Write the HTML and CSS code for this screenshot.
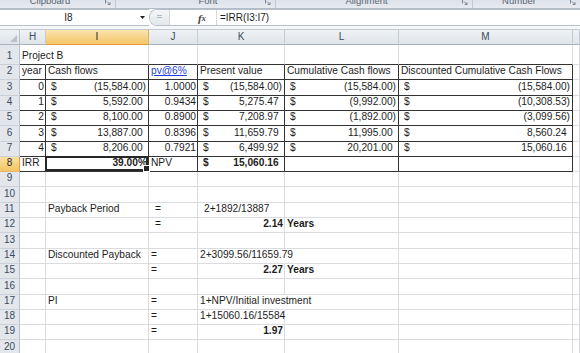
FILE: index.html
```html
<!DOCTYPE html>
<html>
<head>
<meta charset="utf-8">
<link rel="stylesheet" href="styles.css">
</head>
<body>
<div class="ribbon">
  <div class="grp g1"><span class="lbl">Clipboard</span><svg class="launch" width="6" height="8" viewBox="0 0 6 8"><path d="M0.5 0v3.5M2 1.5L5 4.5M5 2.2v2.3H2.7" fill="none" stroke="#7d8794" stroke-width="1"/></svg></div>
  <div class="grp g2"><span class="lbl">Font</span><svg class="launch" width="6" height="8" viewBox="0 0 6 8"><path d="M0.5 0v3.5M2 1.5L5 4.5M5 2.2v2.3H2.7" fill="none" stroke="#7d8794" stroke-width="1"/></svg></div>
  <div class="grp g3"><span class="lbl">Alignment</span><svg class="launch" width="6" height="8" viewBox="0 0 6 8"><path d="M0.5 0v3.5M2 1.5L5 4.5M5 2.2v2.3H2.7" fill="none" stroke="#7d8794" stroke-width="1"/></svg></div>
  <div class="grp g4"><span class="lbl">Number</span><svg class="launch" width="6" height="8" viewBox="0 0 6 8"><path d="M0.5 0v3.5M2 1.5L5 4.5M5 2.2v2.3H2.7" fill="none" stroke="#7d8794" stroke-width="1"/></svg></div>
</div>
<div class="fbar">
  <div class="namebox"><span class="nbtext">I8</span><svg class="dd" width="5" height="3" viewBox="0 0 5 3"><path d="M0 0h5L2.5 3z" fill="#222"/></svg></div>
  <div class="fbox">
    <div class="grip"><svg width="20" height="15" viewBox="0 0 20 15"><path d="M7 5.5h5M7 7.5h5" stroke="#b3bac3" stroke-width="1"/></svg></div>
    <div class="fx"><span class="f">f</span><span class="x">x</span></div>
    <div class="ftext">=IRR(I3:I7)</div>
  </div>
</div>
<div class="gap"></div>
<div class="sheet">
  <div class="hdr">
    <div class="corner"><svg width="19" height="14" viewBox="0 0 19 14"><path d="M17 5v7h-7z" fill="#b9c1cb"/></svg></div>
    <div class="hc ch">H</div>
    <div class="hc ci on">I</div>
    <div class="hc cj">J</div>
    <div class="hc ck">K</div>
    <div class="hc cl">L</div>
    <div class="hc cm">M</div>
    <div class="hc cn"></div>
  </div>

  <div class="r h20">
    <div class="rh">1</div>
    <div class="c ch tb ov">Project B</div>
    <div class="c ci tb"></div>
    <div class="c cj tb"></div>
    <div class="c ck tb"></div>
    <div class="c cl tb"></div>
    <div class="c cm tb"></div>
    <div class="c cn"></div>
  </div>

  <div class="r">
    <div class="rh">2</div>
    <div class="c ch t">year</div>
    <div class="c ci t">Cash flows</div>
    <div class="c cj t"><span class="lnk">pv@6%</span></div>
    <div class="c ck t">Present value</div>
    <div class="c cl t">Cumulative Cash flows</div>
    <div class="c cm t">Discounted Cumulative Cash Flows</div>
    <div class="c cn"></div>
  </div>

  <div class="r h16">
    <div class="rh">3</div>
    <div class="c ch t rt">0</div>
    <div class="c ci t mn"><span>$</span><span>(15,584.00)</span></div>
    <div class="c cj t rt">1.0000</div>
    <div class="c ck t mn"><span>$</span><span>(15,584.00)</span></div>
    <div class="c cl t mn"><span>$</span><span>(15,584.00)</span></div>
    <div class="c cm t mn"><span>$</span><span>(15,584.00)</span></div>
    <div class="c cn"></div>
  </div>

  <div class="r">
    <div class="rh">4</div>
    <div class="c ch t rt">1</div>
    <div class="c ci t mn"><span>$</span><span class="pos">5,592.00</span></div>
    <div class="c cj t rt">0.9434</div>
    <div class="c ck t mn"><span>$</span><span class="pos">5,275.47</span></div>
    <div class="c cl t mn"><span>$</span><span>(9,992.00)</span></div>
    <div class="c cm t mn"><span>$</span><span>(10,308.53)</span></div>
    <div class="c cn"></div>
  </div>

  <div class="r">
    <div class="rh">5</div>
    <div class="c ch t rt">2</div>
    <div class="c ci t mn"><span>$</span><span class="pos">8,100.00</span></div>
    <div class="c cj t rt">0.8900</div>
    <div class="c ck t mn"><span>$</span><span class="pos">7,208.97</span></div>
    <div class="c cl t mn"><span>$</span><span>(1,892.00)</span></div>
    <div class="c cm t mn"><span>$</span><span>(3,099.56)</span></div>
    <div class="c cn"></div>
  </div>

  <div class="r h16">
    <div class="rh">6</div>
    <div class="c ch t rt">3</div>
    <div class="c ci t mn"><span>$</span><span class="pos">13,887.00</span></div>
    <div class="c cj t rt">0.8396</div>
    <div class="c ck t mn"><span>$</span><span class="pos">11,659.79</span></div>
    <div class="c cl t mn"><span>$</span><span class="pos">11,995.00</span></div>
    <div class="c cm t mn"><span>$</span><span class="pos">8,560.24</span></div>
    <div class="c cn"></div>
  </div>

  <div class="r">
    <div class="rh">7</div>
    <div class="c ch t rt">4</div>
    <div class="c ci t mn"><span>$</span><span class="pos">8,206.00</span></div>
    <div class="c cj t rt">0.7921</div>
    <div class="c ck t mn"><span>$</span><span class="pos">6,499.92</span></div>
    <div class="c cl t mn"><span>$</span><span class="pos">20,201.00</span></div>
    <div class="c cm t mn"><span>$</span><span class="pos">15,060.16</span></div>
    <div class="c cn"></div>
  </div>

  <div class="r">
    <div class="rh on">8</div>
    <div class="c ch t">IRR</div>
    <div class="c ci t rt b sel">39.00%</div>
    <div class="c cj t">NPV</div>
    <div class="c ck t mn b"><span>$</span><span class="pos">15,060.16</span></div>
    <div class="c cl t"></div>
    <div class="c cm t"></div>
    <div class="c cn"></div>
  </div>

  <div class="r">
    <div class="rh">9</div>
    <div class="c ch"></div><div class="c ci"></div><div class="c cj"></div><div class="c ck"></div><div class="c cl"></div><div class="c cm"></div><div class="c cn"></div>
  </div>

  <div class="r h16">
    <div class="rh">10</div>
    <div class="c ch"></div><div class="c ci"></div><div class="c cj"></div><div class="c ck"></div><div class="c cl"></div><div class="c cm"></div><div class="c cn"></div>
  </div>

  <div class="r">
    <div class="rh">11</div>
    <div class="c ch"></div>
    <div class="c ci">Payback Period</div>
    <div class="c cj ind">=</div>
    <div class="c ck ind">2+1892/13887</div>
    <div class="c cl"></div><div class="c cm"></div><div class="c cn"></div>
  </div>

  <div class="r">
    <div class="rh">12</div>
    <div class="c ch"></div>
    <div class="c ci"></div>
    <div class="c cj ind">=</div>
    <div class="c ck rt b">2.14</div>
    <div class="c cl b">Years</div>
    <div class="c cm"></div><div class="c cn"></div>
  </div>

  <div class="r h16">
    <div class="rh">13</div>
    <div class="c ch"></div><div class="c ci"></div><div class="c cj"></div><div class="c ck"></div><div class="c cl"></div><div class="c cm"></div><div class="c cn"></div>
  </div>

  <div class="r">
    <div class="rh">14</div>
    <div class="c ch"></div>
    <div class="c ci">Discounted Payback</div>
    <div class="c cj">=</div>
    <div class="c ck ov">2+3099.56/11659.79</div>
    <div class="c cl"></div><div class="c cm"></div><div class="c cn"></div>
  </div>

  <div class="r">
    <div class="rh">15</div>
    <div class="c ch"></div>
    <div class="c ci"></div>
    <div class="c cj">=</div>
    <div class="c ck rt b">2.27</div>
    <div class="c cl b">Years</div>
    <div class="c cm"></div><div class="c cn"></div>
  </div>

  <div class="r h16">
    <div class="rh">16</div>
    <div class="c ch"></div><div class="c ci"></div><div class="c cj"></div><div class="c ck"></div><div class="c cl"></div><div class="c cm"></div><div class="c cn"></div>
  </div>

  <div class="r">
    <div class="rh">17</div>
    <div class="c ch"></div>
    <div class="c ci">PI</div>
    <div class="c cj">=</div>
    <div class="c ck ov">1+NPV/Initial investment</div>
    <div class="c cl"></div><div class="c cm"></div><div class="c cn"></div>
  </div>

  <div class="r">
    <div class="rh">18</div>
    <div class="c ch"></div>
    <div class="c ci"></div>
    <div class="c cj">=</div>
    <div class="c ck">1+15060.16/15584</div>
    <div class="c cl"></div><div class="c cm"></div><div class="c cn"></div>
  </div>

  <div class="r">
    <div class="rh">19</div>
    <div class="c ch"></div>
    <div class="c ci"></div>
    <div class="c cj">=</div>
    <div class="c ck rt b">1.97</div>
    <div class="c cl"></div><div class="c cm"></div><div class="c cn"></div>
  </div>

  <div class="r h16">
    <div class="rh">20</div>
    <div class="c ch"></div><div class="c ci"></div><div class="c cj"></div><div class="c ck"></div><div class="c cl"></div><div class="c cm"></div><div class="c cn"></div>
  </div>
</div>
</body>
</html>
```

FILE: styles.css
```css
* { box-sizing: border-box; }
html, body { margin: 0; padding: 0; }
body {
  width: 580px;
  height: 353px;
  overflow: hidden;
  background: #ffffff;
  font-family: "Liberation Sans", Arial, sans-serif;
  color: #1d1d1d;
}

/* ribbon group label strip */
.ribbon {
  display: flex;
  height: 9px;
  background: linear-gradient(#dde2e9, #e7ebf0);
  border-bottom: 1px solid #b2bbc6;
  overflow: hidden;
}
.grp {
  flex: none;
  display: flex;
  align-items: flex-start;
  border-right: 1px solid #c2c9d2;
  overflow: hidden;
}
.g1 { width: 116px; }
.g2 { width: 160px; padding-left: 40px; }
.g3 { width: 197px; }
.g4 { width: 108px; }
.lbl {
  flex: 1;
  text-align: center;
  font-size: 9.5px;
  line-height: 10px;
  margin-top: -4px;
  color: #5d6673;
  white-space: nowrap;
}
.launch { flex: none; margin: 0 4px 0 5px; }

/* formula bar */
.fbar {
  display: flex;
  height: 17px;
  background: #ffffff;
}
.namebox {
  flex: none;
  width: 149px;
  display: flex;
  align-items: center;
  border-top: 1px solid #b7bfc9;
  border-bottom: 1px solid #b7bfc9;
}
.nbtext {
  flex: 1;
  text-align: center;
  font-size: 10px;
  line-height: 12px;
  color: #1d1d1d;
}
.dd { flex: none; margin: 0 4px 0 3px; }
.fbox {
  flex: 1;
  display: flex;
  align-items: stretch;
  border: 1px solid #b7bfc9;
  border-right: none;
  border-radius: 8px 0 0 8px;
  overflow: hidden;
}
.grip {
  flex: none;
  width: 20px;
  background: linear-gradient(#f4f5f7, #e3e7eb);
  border-right: 1px solid #d3d8de;
}
.grip svg { display: block; }
.fx {
  flex: none;
  width: 46px;
  padding-left: 28px;
  display: flex;
  align-items: center;
  font-family: "Liberation Serif", "Times New Roman", serif;
  font-style: italic;
  font-weight: bold;
  color: #3f3f3f;
}
.fx .f { font-size: 11px; line-height: 12px; }
.fx .x { font-size: 8px; line-height: 12px; margin-top: 3px; }
.ftext {
  flex: 1;
  border-left: 1px solid #d3d8de;
  padding-left: 3px;
  font-size: 10px;
  line-height: 15px;
  color: #1d1d1d;
  white-space: nowrap;
}
.gap { height: 3px; background: #f6f7f9; }

/* sheet */
.sheet { font-size: 10.2px; }
.hdr { display: flex; height: 16px; }
.corner {
  flex: none;
  width: 20px;
  background: linear-gradient(#eef1f4, #dfe4e9);
  border-top: 1px solid #c3cad3;
  border-bottom: 1px solid #a9b3be;
  border-right: 1px solid #bac2cc;
}
.corner svg { display: block; }
.hc {
  flex: none;
  display: flex;
  align-items: center;
  justify-content: center;
  background: linear-gradient(#eff2f5, #dfe4e9);
  border-top: 1px solid #c3cad3;
  border-bottom: 1px solid #a9b3be;
  border-right: 1px solid #c6ccd4;
  color: #3c4b5e;
  font-size: 10px;
  line-height: 12px;
}
.hc.on {
  background: linear-gradient(#fbe4ab, #f4c66a);
  border-bottom-color: #e99b3d;
  border-right-color: #e2b168;
  color: #2a2a2a;
}

.ch { width: 26px; }
.ci { width: 103px; }
.cj { width: 49px; }
.ck { width: 87px; }
.cl { width: 114px; }
.cm { width: 174px; }
.cn { flex: 1 1 auto; }

.r { display: flex; height: 15px; }
.r.h16 { height: 16px; }
.r.h20 { height: 20px; }

.rh {
  flex: none;
  width: 20px;
  display: flex;
  align-items: flex-end;
  justify-content: center;
  padding-bottom: 2px;
  background: #e3e7ec;
  border-right: 1px solid #bac2cc;
  border-bottom: 1px solid #cbd1d8;
  color: #3c4b5e;
  font-size: 10px;
  line-height: 12px;
}
.rh.on {
  background: linear-gradient(#fadfa2, #f3c564);
  border-right-color: #e69a3a;
  border-bottom-color: #e6b46a;
  color: #2a2a2a;
}

.c {
  flex: none;
  display: flex;
  align-items: flex-end;
  padding: 0 1px 2px 2px;
  border-right: 1px solid #dadcdf;
  border-bottom: 1px solid #dadcdf;
  line-height: 12px;
  white-space: nowrap;
}
.c.cn { flex: 1 1 auto; }
.rt { justify-content: flex-end; }
.t { border-right-color: #333333; border-bottom-color: #333333; }
.tb { border-bottom-color: #333333; }
.ov { border-right-color: #ffffff; }
.mn { justify-content: space-between; padding: 0 2px 2px 5px; }
.pos { padding-right: 3.4px; }
.b { font-weight: bold; }
.ind { padding-left: 6px; }
.lnk { color: #1b3fd8; text-decoration: underline; }

.sel { position: relative; }
.sel::after {
  content: "";
  position: absolute;
  left: -1px;
  top: -1px;
  right: 0;
  bottom: 0;
  border: 2px solid #272727;
  pointer-events: none;
}
.sel::before {
  content: "";
  position: absolute;
  right: -2px;
  bottom: -1px;
  width: 5px;
  height: 5px;
  background: #272727;
  border: 1px solid #ffffff;
  z-index: 2;
}
```
